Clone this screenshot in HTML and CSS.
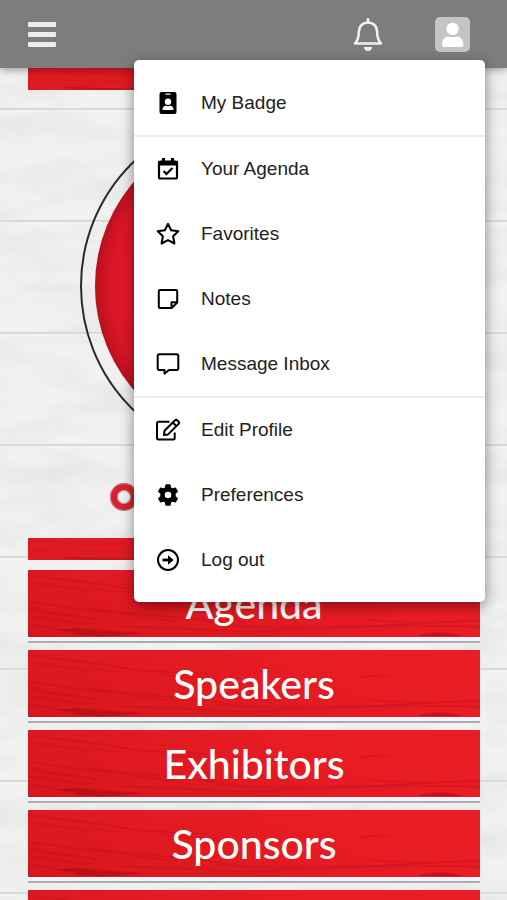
FILE: index.html
```html
<!DOCTYPE html>
<html lang="en">
<head>
    <meta charset="UTF-8">
    <meta name="viewport" content="width=device-width, initial-scale=1.0">
    <title>Event Home</title>
    <link rel="stylesheet" href="styles.css">
</head>
<body>
    <!-- shared drawings -->
    <svg class="defs" aria-hidden="true">
        <symbol id="grain" viewBox="0 0 452 67" preserveAspectRatio="none">
            <g fill="none" stroke="#b01018" stroke-width="1.500" opacity="0.32">
                <path d="M0 5c30 5 60 6 90 12s60 5 90 7"/>
                <path d="M0 11c20 5 40 7 62 10"/>
                <path d="M40 15c50 10 110 8 170 18" opacity="0.6"/>
                <path d="M0 32c30 3 50 8 80 10s40 8 70 9"/>
                <path d="M0 38c20 7 45 6 70 12" stroke-width="2"/>
                <path d="M60 38c50 8 110 8 160 20"/>
                <path d="M0 46c25 2 40 8 64 8"/>
                <path d="M0 55c15 0 30 6 44 6"/>
                <path d="M90 56c60 2 110 6 160 6"/>
                <path d="M190 55c70 5 150 2 262-5"/>
                <path d="M225 61c70-2 150-8 227-4"/>
                <path d="M340 50c40 3 70 4 112 1"/>
                <path d="M330 28c12-3 20-3 32-2"/>
            </g>
            <path d="M30 60c20-4 40 0 60 2c-20 3-42 2-60-2zM42 64c25-4 45-3 74-1c-30 4-50 4-74 1z" fill="#a80d14" opacity="0.55"/>
            <path d="M390 66c15-5 30-4 44 0z" fill="#a80d14" opacity="0.6"/>
        </symbol>
    </svg>

    <div class="app">
        <svg class="wood" aria-hidden="true">
            <filter id="paint" x="0" y="0" width="100%" height="100%">
                <feTurbulence type="fractalNoise" baseFrequency="0.012 0.035" numOctaves="4" seed="8"/>
                <feColorMatrix values="0 0 0 0 0.65  0 0 0 0 0.65  0 0 0 0 0.65  0.7 0 0 0 -0.26"/>
            </filter>
            <pattern id="planks" y="108" width="507" height="112" patternUnits="userSpaceOnUse">
                <rect width="507" height="2" fill="#d8d8d8"/>
                <rect y="2" width="507" height="1" fill="#f5f5f5"/>
            </pattern>
            <rect width="100%" height="100%" fill="#f1f1f1"/>
            <rect width="100%" height="100%" filter="url(#paint)"/>
            <rect width="100%" height="100%" fill="url(#planks)"/>
        </svg>

        <header class="topbar">
            <button class="icon-button" aria-label="Menu">
                <svg width="28" height="25" viewBox="0 0 28 25" fill="#ececec">
                    <rect width="28" height="5" rx="1"/>
                    <rect y="10" width="28" height="5" rx="1"/>
                    <rect y="20" width="28" height="5" rx="1"/>
                </svg>
            </button>
            <div class="topbar-actions">
                <button class="icon-button" aria-label="Notifications">
                    <svg width="30" height="34" viewBox="0 0 30 34">
                        <path d="M15 5.500c-5.500 0-8.800 3.800-9 8.500c-.2 7-1.200 9.500-4 12.500h26c-2.800-3-3.800-5.500-4-12.500c-.2-4.700-3.500-8.500-9-8.500z" fill="none" stroke="#f0f0f0" stroke-width="2.600" stroke-linejoin="round"/>
                        <path d="M15 2.500v3" stroke="#f0f0f0" stroke-width="3" stroke-linecap="round"/>
                        <path d="M11 30h8a4 4 0 0 1-8 0z" fill="#f0f0f0"/>
                    </svg>
                </button>
                <button class="icon-button avatar" aria-label="Account" aria-expanded="true">
                    <svg width="35" height="35" viewBox="0 0 35 35" fill="#fff">
                        <circle cx="17.500" cy="12" r="6.200"/>
                        <path d="M7 28c0-5.500 3-8.500 6.500-8.500q4 1.600 8 0c3.500 0 7 3 7 8.500q0 2-2 2h-17.500q-2 0-2-2z"/>
                    </svg>
                </button>
            </div>
        </header>

        <main class="content">
            <section class="banner">
                <div class="banner-strip"><svg><use href="#grain"/></svg></div>
                <div class="ring"><div class="disc"></div></div>
                <div class="banner-line"><span class="dot"></span></div>
                <div class="banner-strip"><svg><use href="#grain"/></svg></div>
            </section>

            <nav class="tiles">
                <a class="tile" href="#agenda"><svg><use href="#grain"/></svg><span>Agenda</span></a>
                <a class="tile" href="#speakers"><svg><use href="#grain"/></svg><span>Speakers</span></a>
                <a class="tile" href="#exhibitors"><svg><use href="#grain"/></svg><span>Exhibitors</span></a>
                <a class="tile" href="#sponsors"><svg><use href="#grain"/></svg><span>Sponsors</span></a>
                <a class="tile" href="#more" aria-label="More"><svg><use href="#grain"/></svg></a>
            </nav>
        </main>

        <nav class="menu" aria-label="Account">
            <div class="menu-group">
                <a class="menu-item" href="#badge">
                    <svg viewBox="0 0 24 24">
                        <path fill-rule="evenodd" d="M5.500 1h13a2 2 0 0 1 2 2v18a2 2 0 0 1-2 2h-13a2 2 0 0 1-2-2v-18a2 2 0 0 1 2-2zM9.500 2.500v1.300h5v-1.300zM12 7.500a3.200 3.200 0 1 0 0 6.400a3.200 3.200 0 0 0 0-6.400zM6.500 19h11c0-3-1.500-4.200-3.500-4.200q-2 .8-4 0c-2 0-3.500 1.200-3.500 4.200z"/>
                    </svg>
                    <span>My Badge</span>
                </a>
            </div>
            <div class="menu-group">
                <a class="menu-item" href="#your-agenda">
                    <svg viewBox="0 0 24 24">
                        <rect x="3" y="4.500" width="18" height="17" rx="1.500" fill="none" stroke="#000" stroke-width="2.200"/>
                        <path d="M2 4h20v4.500h-20zM6 1h3v5h-3zM15 1h3v5h-3z"/>
                        <path d="M7.500 14l3 3l6-6" fill="none" stroke="#000" stroke-width="2.200"/>
                    </svg>
                    <span>Your Agenda</span>
                </a>
                <a class="menu-item" href="#favorites">
                    <svg viewBox="0 0 24 24" class="line">
                        <path d="M12 1.800l3.100 6.500l7.200 1l-5.200 5l1.300 7.200l-6.400-3.400l-6.400 3.400l1.300-7.200l-5.200-5l7.200-1z"/>
                    </svg>
                    <span>Favorites</span>
                </a>
                <a class="menu-item" href="#notes">
                    <svg viewBox="0 0 24 24" class="line">
                        <path d="M4 3h16q1.200 0 1.200 1.200v11.300l-5.500 5.500h-11.700q-1.200 0-1.200-1.200v-15.600q0-1.200 1.200-1.200zM15.500 20.500v-5.200h5.200"/>
                    </svg>
                    <span>Notes</span>
                </a>
                <a class="menu-item" href="#inbox">
                    <svg viewBox="0 0 24 24" class="line">
                        <path d="M3.500 2.200h17q1.800 0 1.800 1.800v12.200q0 1.800-1.800 1.800h-7.500l-4.500 3.600v-3.600h-5q-1.800 0-1.800-1.800v-12.200q0-1.800 1.800-1.800z"/>
                    </svg>
                    <span>Message Inbox</span>
                </a>
            </div>
            <div class="menu-group">
                <a class="menu-item" href="#profile">
                    <svg viewBox="0 0 24 24" class="line">
                        <path d="M13.500 3.800h-11q-1.500 0-1.500 1.500v14.700q0 1.500 1.500 1.500h14.700q1.500 0 1.500-1.500v-5.500"/>
                        <path d="M8.500 12.800l10.300-10.300q1.300-1.300 2.600 0l1 1q1.300 1.300 0 2.600l-10.300 10.300l-4.200.6zM16.800 4.500l3.600 3.600"/>
                    </svg>
                    <span>Edit Profile</span>
                </a>
                <a class="menu-item" href="#preferences">
                    <svg viewBox="0 0 24 24">
                        <path fill-rule="evenodd" d="M10.200 2h3.600l.6 3l2 1.200l2.900-1l1.900 3.200l-2.300 2v3.200l2.300 2l-1.900 3.200l-2.900-1l-2 1.200l-.6 3h-3.600l-.6-3l-2-1.200l-2.900 1l-1.900-3.200l2.300-2v-3.200l-2.300-2l1.900-3.200l2.900 1l2-1.200zM12 8a4 4 0 1 0 0 8a4 4 0 0 0 0-8z" stroke="#000" stroke-width="1.500" stroke-linejoin="round"/>
                    </svg>
                    <span>Preferences</span>
                </a>
                <a class="menu-item" href="#logout">
                    <svg viewBox="0 0 24 24" class="line">
                        <circle cx="12" cy="12" r="10"/>
                        <path d="M6.500 12h7" stroke-width="2.800"/>
                        <path d="M12.500 8l4.500 4l-4.500 4z" fill="#000" stroke-width="1"/>
                    </svg>
                    <span>Log out</span>
                </a>
            </div>
        </nav>
    </div>
</body>
</html>
```

FILE: styles.css
```css
* {
    box-sizing: border-box;
}
body {
    margin: 0;
    font-family: "Liberation Sans", Arial, sans-serif;
    color: #222;
}
a {
    color: inherit;
    text-decoration: none;
}
.defs {
    position: absolute;
    width: 0;
    height: 0;
}
.app {
    position: relative;
    height: 100vh;
    overflow: hidden;
    background: #efefef;
}
.wood {
    position: absolute;
    inset: 0;
    width: 100%;
    height: 100%;
}

/* top bar */
.topbar {
    position: relative;
    z-index: 1;
    display: flex;
    justify-content: space-between;
    align-items: center;
    height: 68px;
    padding: 0 37px 0 28px;
    background: #7d7d7f;
    box-shadow: 0 2px 8px rgba(0, 0, 0, 0.35);
}
.topbar-actions {
    display: flex;
    align-items: center;
    gap: 52px;
}
.icon-button {
    display: flex;
    padding: 0;
    border: 0;
    background: none;
    cursor: pointer;
}
.avatar {
    border-radius: 5px;
    background: #c4c4c4;
}

/* banner */
.content {
    position: relative;
    padding: 0 27px 0 28px;
}
.banner {
    display: flex;
    flex-direction: column;
    align-items: center;
}
.banner-strip {
    width: 100%;
    height: 22px;
    background: #e01b22;
}
.banner-strip svg,
.tile svg {
    display: block;
    width: 100%;
    height: 100%;
}
.ring {
    width: 348px;
    max-width: 100%;
    aspect-ratio: 1;
    margin: 22px 0 23px;
    padding: 13px;
    border: 2px solid #2b2b2b;
    border-radius: 50%;
}
.disc {
    height: 100%;
    border-radius: 50%;
    background: #e2182a;
    box-shadow: inset 0 0 24px rgba(90, 0, 10, 0.6);
}
.banner-line {
    display: flex;
    width: 288px;
    margin-bottom: 27px;
}
.dot {
    width: 28px;
    height: 28px;
    border: 7px solid #dc1f2e;
    border-radius: 50%;
    outline: 1px solid #999;
    outline-offset: -1px;
    box-shadow: inset 0 0 0 1px #999;
}

/* tiles */
.tiles {
    display: flex;
    flex-direction: column;
    gap: 13px;
    margin-top: 10px;
}
.tile {
    position: relative;
    display: flex;
    justify-content: center;
    align-items: center;
    height: 67px;
    background: linear-gradient(20deg, #d8161d, #ea1c24 70%);
    box-shadow: 0 1px #fff, 0 4px #f4f4f4, 0 6px #a9abad, 0 7px #f4f4f4;
    color: #fff;
    font-family: Lato, sans-serif;
    font-size: 41px;
    font-weight: 500;
    line-height: 48px;
}
.tile svg {
    position: absolute;
    inset: 0;
}
.tile span {
    position: relative;
}

/* account menu */
.menu {
    position: absolute;
    z-index: 2;
    top: 60px;
    right: 22px;
    width: 351px;
    max-width: calc(100% - 44px);
    padding: 11px 0 10px;
    border-radius: 5px;
    background: #fff;
    box-shadow: 0 4px 14px rgba(0, 0, 0, 0.45);
}
.menu-group {
    display: flex;
    flex-direction: column;
    gap: 1px;
}
.menu-group + .menu-group {
    border-top: 2px solid #ececec;
}
.menu-item {
    display: flex;
    align-items: center;
    gap: 21px;
    height: 64px;
    padding: 0 22px;
    font-size: 19px;
    line-height: 24px;
}
.menu-item svg {
    width: 24px;
    height: 24px;
    overflow: visible;
}
.line {
    fill: none;
    stroke: #000;
    stroke-width: 2;
    stroke-linejoin: round;
}
```
